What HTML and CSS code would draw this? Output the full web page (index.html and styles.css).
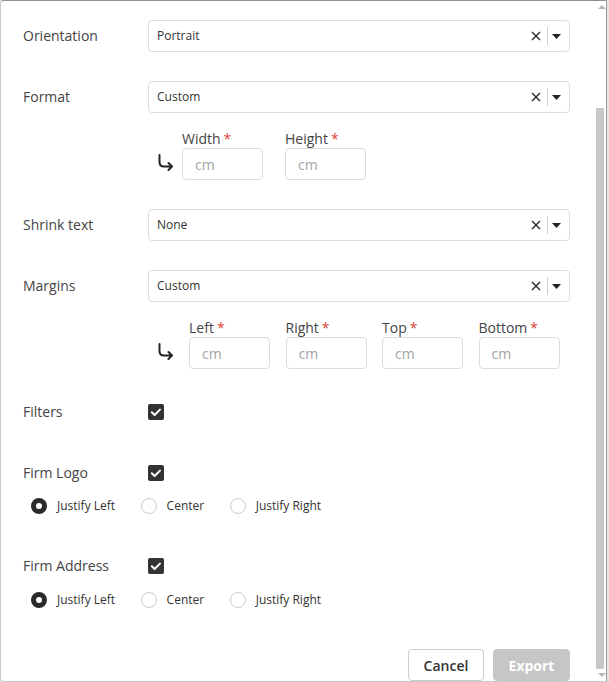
FILE: index.html
```html
<!DOCTYPE html>
<html lang="en">
<head>
<meta charset="utf-8">
<title>Export</title>
<link rel="stylesheet" href="styles.css">
</head>
<body>
<div class="dialog">
  <div class="content">
    <div class="row">
      <div class="label">Orientation</div>
      <div class="select">
        <span class="select-value">Portrait</span>
        <span class="select-clear"><svg width="10" height="10" viewBox="0 0 10 10"><path d="M1 1 L9 9 M9 1 L1 9" stroke="#333" stroke-width="1.5" fill="none"/></svg></span>
        <span class="select-sep"></span>
        <span class="select-arrow"><svg width="9" height="5" viewBox="0 0 9 5"><path d="M0 0 H9 L4.5 5 Z" fill="#222"/></svg></span>
      </div>
    </div>

    <div class="row gap29">
      <div class="label">Format</div>
      <div class="select">
        <span class="select-value">Custom</span>
        <span class="select-clear"><svg width="10" height="10" viewBox="0 0 10 10"><path d="M1 1 L9 9 M9 1 L1 9" stroke="#333" stroke-width="1.5" fill="none"/></svg></span>
        <span class="select-sep"></span>
        <span class="select-arrow"><svg width="9" height="5" viewBox="0 0 9 5"><path d="M0 0 H9 L4.5 5 Z" fill="#222"/></svg></span>
      </div>
    </div>

    <div class="subrow sub-size">
      <svg class="sub-arrow" width="17" height="17" viewBox="0 0 17 17"><path d="M2.5 1 V8 Q2.5 12.5 7 12.5 H15 M11.5 9 L15 12.5 L11.5 16" stroke="#222" stroke-width="2" fill="none" stroke-linecap="round" stroke-linejoin="round"/></svg>
      <div class="fields fields-size">
        <div class="field">
          <div class="field-label">Width<span class="req">*</span></div>
          <input class="field-input" placeholder="cm">
        </div>
        <div class="field">
          <div class="field-label">Height<span class="req">*</span></div>
          <input class="field-input" placeholder="cm">
        </div>
      </div>
    </div>

    <div class="row gap29">
      <div class="label">Shrink text</div>
      <div class="select">
        <span class="select-value">None</span>
        <span class="select-clear"><svg width="10" height="10" viewBox="0 0 10 10"><path d="M1 1 L9 9 M9 1 L1 9" stroke="#333" stroke-width="1.5" fill="none"/></svg></span>
        <span class="select-sep"></span>
        <span class="select-arrow"><svg width="9" height="5" viewBox="0 0 9 5"><path d="M0 0 H9 L4.5 5 Z" fill="#222"/></svg></span>
      </div>
    </div>

    <div class="row gap29">
      <div class="label">Margins</div>
      <div class="select">
        <span class="select-value">Custom</span>
        <span class="select-clear"><svg width="10" height="10" viewBox="0 0 10 10"><path d="M1 1 L9 9 M9 1 L1 9" stroke="#333" stroke-width="1.5" fill="none"/></svg></span>
        <span class="select-sep"></span>
        <span class="select-arrow"><svg width="9" height="5" viewBox="0 0 9 5"><path d="M0 0 H9 L4.5 5 Z" fill="#222"/></svg></span>
      </div>
    </div>

    <div class="subrow sub-margins">
      <svg class="sub-arrow" width="17" height="17" viewBox="0 0 17 17"><path d="M2.5 1 V8 Q2.5 12.5 7 12.5 H15 M11.5 9 L15 12.5 L11.5 16" stroke="#222" stroke-width="2" fill="none" stroke-linecap="round" stroke-linejoin="round"/></svg>
      <div class="fields fields-margins">
        <div class="field">
          <div class="field-label">Left<span class="req">*</span></div>
          <input class="field-input" placeholder="cm">
        </div>
        <div class="field">
          <div class="field-label">Right<span class="req">*</span></div>
          <input class="field-input" placeholder="cm">
        </div>
        <div class="field">
          <div class="field-label">Top<span class="req">*</span></div>
          <input class="field-input" placeholder="cm">
        </div>
        <div class="field">
          <div class="field-label">Bottom<span class="req">*</span></div>
          <input class="field-input" placeholder="cm">
        </div>
      </div>
    </div>

    <div class="row check-row gap35">
      <div class="label">Filters</div>
      <span class="checkbox"><svg width="16" height="16" viewBox="0 0 16 16"><path d="M3.8 8.3 L6.6 11 L12 5.6" stroke="#fff" stroke-width="2" fill="none" stroke-linecap="round" stroke-linejoin="round"/></svg></span>
    </div>

    <div class="row check-row gap45">
      <div class="label">Firm Logo</div>
      <span class="checkbox"><svg width="16" height="16" viewBox="0 0 16 16"><path d="M3.8 8.3 L6.6 11 L12 5.6" stroke="#fff" stroke-width="2" fill="none" stroke-linecap="round" stroke-linejoin="round"/></svg></span>
    </div>
    <div class="radios gap17">
      <label class="radio"><span class="radio-dot checked"></span>Justify Left</label>
      <label class="radio"><span class="radio-dot"></span>Center</label>
      <label class="radio"><span class="radio-dot"></span>Justify Right</label>
    </div>

    <div class="row check-row gap44">
      <div class="label">Firm Address</div>
      <span class="checkbox"><svg width="16" height="16" viewBox="0 0 16 16"><path d="M3.8 8.3 L6.6 11 L12 5.6" stroke="#fff" stroke-width="2" fill="none" stroke-linecap="round" stroke-linejoin="round"/></svg></span>
    </div>
    <div class="radios gap18">
      <label class="radio"><span class="radio-dot checked"></span>Justify Left</label>
      <label class="radio"><span class="radio-dot"></span>Center</label>
      <label class="radio"><span class="radio-dot"></span>Justify Right</label>
    </div>

    <div class="footer">
      <button class="btn btn-cancel">Cancel</button>
      <button class="btn btn-export">Export</button>
    </div>
  </div>

  <div class="scrollbar">
    <div class="sb-arrow"><svg width="8" height="4" viewBox="0 0 8 4"><path d="M0 4 L4 0 L8 4 Z" fill="#b8b8b8"/></svg></div>
    <div class="sb-track"><div class="sb-thumb"></div></div>
    <div class="sb-arrow sb-arrow-down"><svg width="8" height="4" viewBox="0 0 8 4"><path d="M0 0 L8 0 L4 4 Z" fill="#b8b8b8"/></svg></div>
  </div>
</div>
</body>
</html>
```

FILE: styles.css
```css
* { box-sizing: border-box; }

html, body {
  margin: 0;
  padding: 0;
}

body {
  background: #e6e6e6;
  font-family: "Open Sans", "Noto Sans", sans-serif;
  width: 609px;
  height: 682px;
  overflow: hidden;
}

.dialog {
  width: 607px;
  height: 682px;
  background: #fff;
  border: 1px solid #c9c9c9;
  border-top-color: #8e8e8e;
  border-right-color: #9a9a9a;
  border-radius: 4px 0 0 4px;
  display: flex;
  overflow: hidden;
}

.content {
  width: 595px;
  padding: 19px 26px 0 22px;
  display: flex;
  flex-direction: column;
}

.row {
  display: flex;
  align-items: center;
  height: 32px;
}

.gap29 { margin-top: 29px; }
.gap35 { margin-top: 35px; }
.gap45 { margin-top: 45px; }
.gap44 { margin-top: 44px; }
.gap17 { margin-top: 17px; }
.gap18 { margin-top: 18px; }

.label {
  width: 125px;
  flex: none;
  font-size: 14px;
  color: #444;
  line-height: 20px;
  margin-top: -1px;
}

.select {
  flex: 1;
  height: 32px;
  border: 1px solid #dcdcdc;
  border-radius: 4px;
  display: flex;
  align-items: center;
  padding-left: 8px;
  padding-right: 8px;
}

.select-value {
  flex: 1;
  font-size: 12px;
  color: #333;
  margin-top: -1px;
}

.select-clear {
  display: flex;
  width: 10px;
  height: 10px;
  margin-right: 6px;
}

.select-sep {
  width: 1px;
  height: 18px;
  background: #cfcfcf;
  margin-right: 4px;
}

.select-arrow {
  display: flex;
  width: 9px;
  height: 5px;
}

.check-row {
  height: 16px;
}

.check-row .label {
  line-height: 16px;
  margin-top: 0;
}

.checkbox {
  width: 16px;
  height: 16px;
  border-radius: 2px;
  background: #333;
  display: flex;
}

/* sub rows */
.subrow {
  display: flex;
  align-items: flex-end;
  margin-top: 16px;
  padding-left: 134px;
}

.sub-arrow {
  flex: none;
  margin-bottom: 9px;
}

.fields {
  display: flex;
}

.fields-size {
  margin-left: 8px;
  gap: 22px;
}

.fields-margins {
  margin-left: 15px;
  gap: 15.5px;
}

.field {
  display: flex;
  flex-direction: column;
}

.field-label {
  font-size: 14px;
  line-height: 19px;
  color: #444;
}

.req {
  color: #e0433a;
  margin-left: 3px;
}

.field-input {
  width: 81px;
  height: 32px;
  border: 1px solid #dcdcdc;
  border-radius: 4px;
  padding: 0 12px;
  font-family: "Open Sans", "Noto Sans", sans-serif;
  font-size: 14px;
  color: #333;
  outline: none;
}

.field-input::placeholder {
  color: #a4a4a4;
}

/* radios */
.radios {
  display: flex;
  gap: 25.5px;
  padding-left: 8px;
  height: 16px;
  align-items: center;
}

.radio {
  display: flex;
  align-items: center;
  gap: 10px;
  font-size: 12px;
  color: #333;
  line-height: 16px;
}

.radio-dot {
  width: 16px;
  height: 16px;
  border-radius: 50%;
  border: 1px solid #cbcbcb;
  background: #fff;
  flex: none;
}

.radio-dot.checked {
  border: 5px solid #2a2a2a;
}

/* footer */
.footer {
  margin-top: 41px;
  display: flex;
  justify-content: flex-end;
  gap: 9px;
}

.btn {
  height: 32px;
  border-radius: 4px;
  font-family: "Open Sans", "Noto Sans", sans-serif;
  font-size: 14px;
  padding: 0;
}

.btn-cancel {
  width: 76px;
  background: #fff;
  border: 1px solid #cccccc;
  color: #333;
  font-weight: 600;
}

.btn-export {
  width: 77px;
  background: #c6c6c6;
  border: 1px solid #c6c6c6;
  color: #fff;
  font-weight: 700;
}

/* fake scrollbar */
.scrollbar {
  width: 10px;
  display: flex;
  flex-direction: column;
}

.sb-arrow {
  height: 12px;
  display: flex;
  align-items: center;
  justify-content: flex-start;
  padding-left: 2px;
}

.sb-track {
  flex: 1;
}

.sb-thumb {
  width: 8px;
  height: 561px;
  margin-top: 95px;
  background: #c8c8c8;
}
```
